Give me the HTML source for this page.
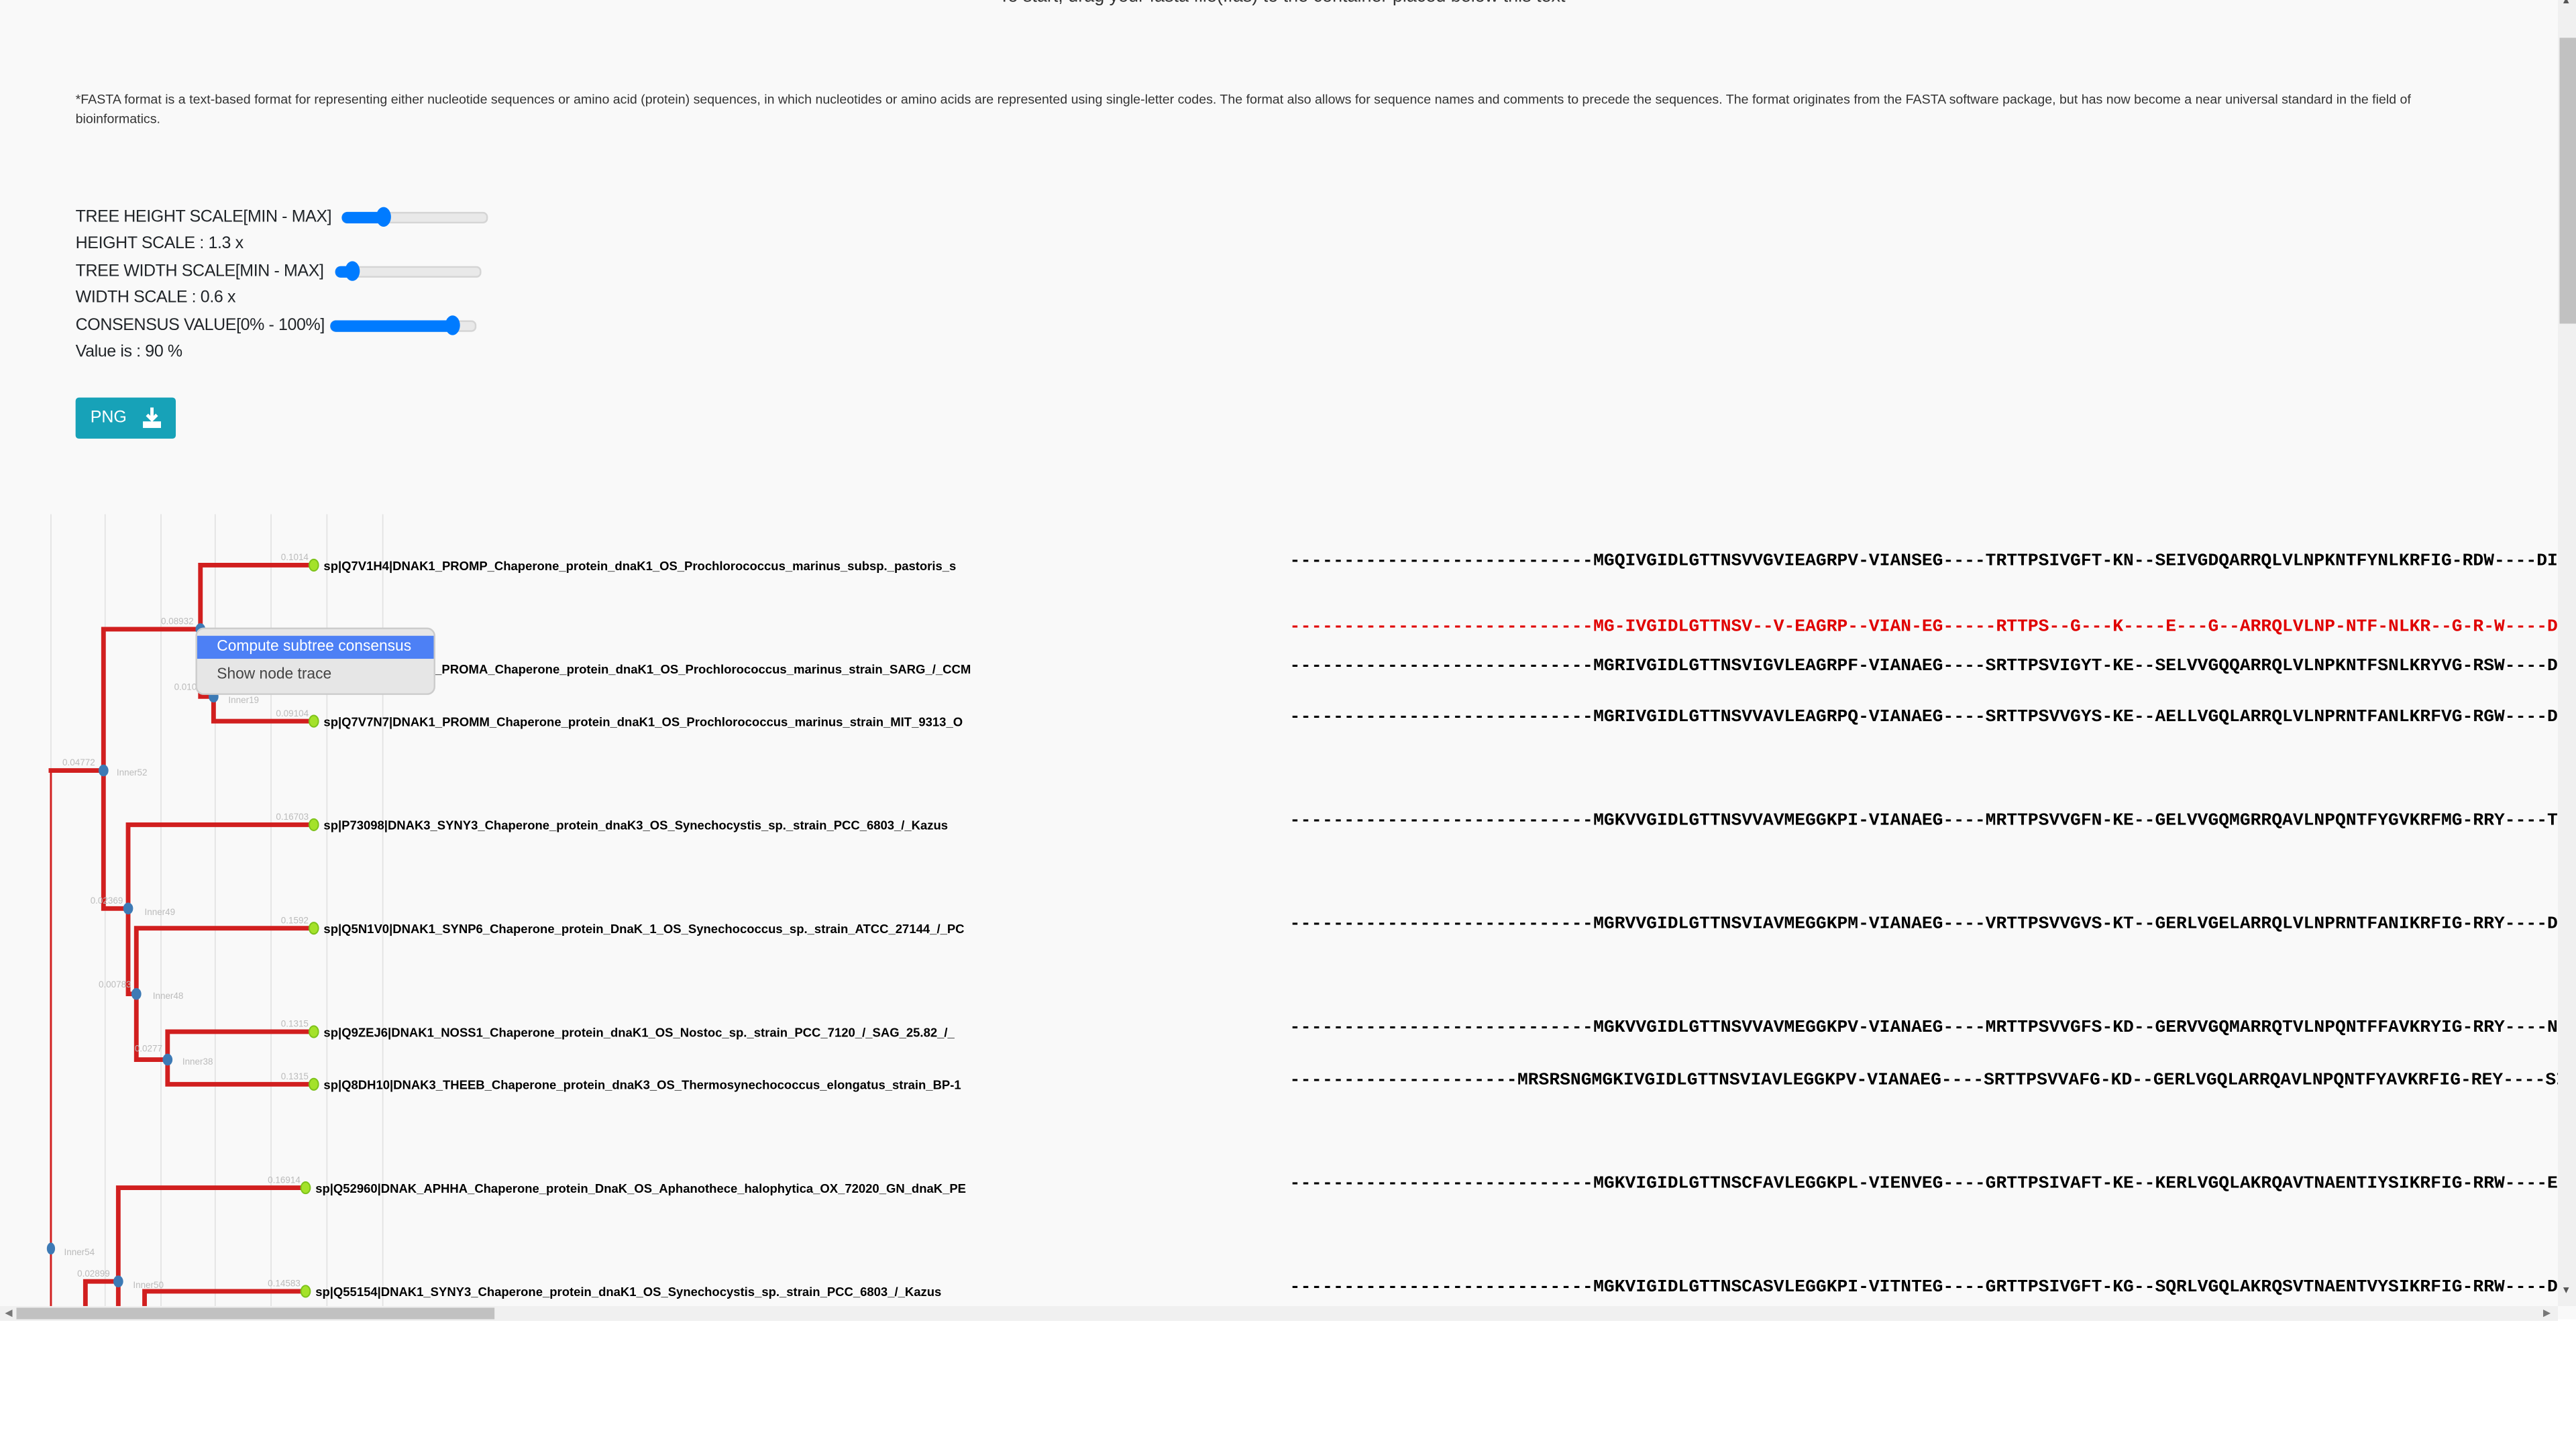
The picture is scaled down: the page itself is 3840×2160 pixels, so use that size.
<!DOCTYPE html>
<html><head><meta charset="utf-8"><style>
html,body{margin:0;padding:0;width:3840px;height:2160px;overflow:hidden;background:#fff}
#w{position:absolute;left:0;top:0;width:1568px;height:882px;transform:scale(2.44898);transform-origin:0 0;font-family:"Liberation Sans",Arial,sans-serif;color:#222}
.bg{position:absolute;left:0;top:0;width:1568px;height:803px;background:#f9f9f9}
.a{position:absolute;white-space:nowrap}
.lbl{font-size:10.2px;color:#212529;letter-spacing:-0.15px}
.tr{position:absolute;height:5px;border-radius:3px;background:#e9e9e9;border:1px solid #d5d5d5}
.fill{position:absolute;height:7px;border-radius:4px;background:#007bff}
.th{position:absolute;width:9px;height:12px;border-radius:50%;background:#007bff}
.seq{position:absolute;left:785px;width:772px;overflow:hidden;font-family:"Liberation Mono",monospace;font-weight:bold;font-size:10.75px;white-space:pre;color:#000;line-height:12px}
.seq i{font-style:normal;letter-spacing:0.15px}
</style></head><body><div id="w">
<div class="bg"></div>
<div class="a" style="left:608px;top:-8px;font-size:11px;color:#333">To start, drag your fasta file(.fas) to the container placed below this text</div>
<div class="a" style="left:46px;top:55px;font-size:8px;color:#333;line-height:12px;white-space:normal;width:1445px">*FASTA format is a text-based format for representing either nucleotide sequences or amino acid (protein) sequences, in which nucleotides or amino acids are represented using single-letter codes. The format also allows for sequence names and comments to precede the sequences. The format originates from the FASTA software package, but has now become a near universal standard in the field of bioinformatics.</div>

<div class="a lbl" style="left:46px;top:127px">TREE HEIGHT SCALE[MIN - MAX]</div>
<div class="tr" style="left:208px;top:129px;width:87px"></div>
<div class="fill" style="left:208px;top:129px;width:28px"></div>
<div class="th" style="left:229px;top:126px"></div>
<div class="a lbl" style="left:46px;top:143px">HEIGHT SCALE : 1.3 x</div>
<div class="a lbl" style="left:46px;top:160px">TREE WIDTH SCALE[MIN - MAX]</div>
<div class="tr" style="left:204px;top:162px;width:87px"></div>
<div class="fill" style="left:204px;top:162px;width:12px"></div>
<div class="th" style="left:210px;top:159px"></div>
<div class="a lbl" style="left:46px;top:176px">WIDTH SCALE : 0.6 x</div>
<div class="a lbl" style="left:46px;top:193px">CONSENSUS VALUE[0% - 100%]</div>
<div class="tr" style="left:201px;top:195px;width:87px"></div>
<div class="fill" style="left:201px;top:195px;width:76px"></div>
<div class="th" style="left:271px;top:192px"></div>
<div class="a lbl" style="left:46px;top:209px">Value is : 90 %</div>

<div class="a" style="left:46px;top:242px;width:61px;height:25px;background:#17a2b8;border-radius:2px;color:#fff;font-size:10.2px">
<span style="position:absolute;left:9px;top:7px">PNG</span>
<svg style="position:absolute;left:40px;top:6px" width="13" height="13" viewBox="0 0 13 13"><path d="M6.5 0v7M3.5 4.5l3 3 3-3" stroke="#fff" stroke-width="2" fill="none"/><rect x="1" y="8.5" width="11" height="4" fill="#fff"/></svg>
</div>

<svg class="a" style="left:0;top:313px" width="1556" height="482" viewBox="0 313 1556 482">
<g stroke="#e2e2e2" stroke-width="0.7">
<line x1="31" y1="313" x2="31" y2="795"/><line x1="64" y1="313" x2="64" y2="795"/><line x1="98" y1="313" x2="98" y2="795"/><line x1="131" y1="313" x2="131" y2="795"/><line x1="165" y1="313" x2="165" y2="795"/><line x1="199" y1="313" x2="199" y2="795"/><line x1="233" y1="313" x2="233" y2="795"/>
</g>
<g stroke="#d11f1f" fill="none" stroke-linecap="square">
<path d="M31 469V795" stroke-width="1.2"/>
<path d="M31 469H63V553H78M63 383V469M63 383H122V344H191M122 383V424H130M130 407V439H191M130 407H191M78 502V605H83M78 502H191M83 565V645H102M83 565H191M102 628V660H191M102 628H191M52 795V780H72M72 723V795M72 723H186M88 795V786H186" stroke-width="2.8"/>
</g>
<g fill="#3d7ab5">
<ellipse cx="63" cy="469" rx="3" ry="3.6"/><ellipse cx="122" cy="383" rx="3" ry="3.6"/><ellipse cx="130" cy="424" rx="3" ry="3.6"/><ellipse cx="78" cy="553" rx="3" ry="3.6"/><ellipse cx="83" cy="605" rx="3" ry="3.6"/><ellipse cx="102" cy="645" rx="3" ry="3.6"/><ellipse cx="31" cy="760" rx="2.5" ry="3.6"/><ellipse cx="72" cy="780" rx="3" ry="3.6"/>
</g>
<g fill="#a4e22a" stroke="#7dc21b" stroke-width="0.8">
<ellipse cx="191" cy="344" rx="2.8" ry="3.5"/><ellipse cx="191" cy="439" rx="2.8" ry="3.5"/><ellipse cx="191" cy="502" rx="2.8" ry="3.5"/><ellipse cx="191" cy="565" rx="2.8" ry="3.5"/><ellipse cx="191" cy="628" rx="2.8" ry="3.5"/><ellipse cx="191" cy="660" rx="2.8" ry="3.5"/><ellipse cx="186" cy="723" rx="2.8" ry="3.5"/><ellipse cx="186" cy="786" rx="2.8" ry="3.5"/>
</g>
<g fill="#bbb" font-size="5.5" font-family="Liberation Sans,Arial,sans-serif">
<text x="171" y="341">0.1014</text><text x="98" y="380">0.08932</text><text x="106" y="420">0.0103</text><text x="168" y="436">0.09104</text><text x="38" y="466">0.04772</text><text x="71" y="472">Inner52</text><text x="139" y="428">Inner19</text><text x="168" y="499">0.16703</text><text x="55" y="550">0.02369</text><text x="88" y="557">Inner49</text><text x="171" y="562">0.1592</text><text x="60" y="601">0.00783</text><text x="93" y="608">Inner48</text><text x="171" y="625">0.1315</text><text x="82" y="640">0.0277</text><text x="111" y="648">Inner38</text><text x="171" y="657">0.1315</text><text x="163" y="720">0.16914</text><text x="39" y="764">Inner54</text><text x="47" y="777">0.02899</text><text x="81" y="784">Inner50</text><text x="163" y="783">0.14583</text>
</g>
<g fill="#000" font-size="7.4" font-weight="bold" font-family="Liberation Sans,Arial,sans-serif">
<text x="197" y="347" textLength="385" lengthAdjust="spacingAndGlyphs">sp|Q7V1H4|DNAK1_PROMP_Chaperone_protein_dnaK1_OS_Prochlorococcus_marinus_subsp._pastoris_s</text>
<text x="197" y="410" textLength="394" lengthAdjust="spacingAndGlyphs">sp|Q7V0X7|DNAK1_PROMA_Chaperone_protein_dnaK1_OS_Prochlorococcus_marinus_strain_SARG_/_CCM</text>
<text x="197" y="442" textLength="389" lengthAdjust="spacingAndGlyphs">sp|Q7V7N7|DNAK1_PROMM_Chaperone_protein_dnaK1_OS_Prochlorococcus_marinus_strain_MIT_9313_O</text>
<text x="197" y="505" textLength="380" lengthAdjust="spacingAndGlyphs">sp|P73098|DNAK3_SYNY3_Chaperone_protein_dnaK3_OS_Synechocystis_sp._strain_PCC_6803_/_Kazus</text>
<text x="197" y="568" textLength="390" lengthAdjust="spacingAndGlyphs">sp|Q5N1V0|DNAK1_SYNP6_Chaperone_protein_DnaK_1_OS_Synechococcus_sp._strain_ATCC_27144_/_PC</text>
<text x="197" y="631" textLength="384" lengthAdjust="spacingAndGlyphs">sp|Q9ZEJ6|DNAK1_NOSS1_Chaperone_protein_dnaK1_OS_Nostoc_sp._strain_PCC_7120_/_SAG_25.82_/_</text>
<text x="197" y="663" textLength="388" lengthAdjust="spacingAndGlyphs">sp|Q8DH10|DNAK3_THEEB_Chaperone_protein_dnaK3_OS_Thermosynechococcus_elongatus_strain_BP-1</text>
<text x="192" y="726" textLength="396" lengthAdjust="spacingAndGlyphs">sp|Q52960|DNAK_APHHA_Chaperone_protein_DnaK_OS_Aphanothece_halophytica_OX_72020_GN_dnaK_PE</text>
<text x="192" y="789" textLength="381" lengthAdjust="spacingAndGlyphs">sp|Q55154|DNAK1_SYNY3_Chaperone_protein_dnaK1_OS_Synechocystis_sp._strain_PCC_6803_/_Kazus</text>
</g>
</svg>

<div class="a" style="left:119px;top:382px;width:144px;height:39px;background:#e6e6e6;border:1px solid #ccc;border-radius:5px;overflow:hidden;font-size:9.3px">
<div style="position:absolute;left:0;top:4px;width:144px;height:14px;background:#4d80f5;color:#fff"><span style="position:absolute;left:12px;top:1px">Compute subtree consensus</span></div>
<div style="position:absolute;left:12px;top:22px;color:#444">Show node trace</div>
</div>

<div class="seq" style="top:336px"><i>----------------------------</i>MGQIVGIDLGTTNSVVGVIEAGRPV-VIANSEG----TRTTPSIVGFT-KN--SEIVGDQARRQLVLNPKNTFYNLKRFIG-RDW----DI</div>
<div class="seq" style="top:376px;color:#e00000"><i>----------------------------</i>MG-IVGIDLGTTNSV--V-EAGRP--VIAN-EG-----RTTPS--G---K----E---G--ARRQLVLNP-NTF-NLKR--G-R-W----DI</div>
<div class="seq" style="top:400px"><i>----------------------------</i>MGRIVGIDLGTTNSVIGVLEAGRPF-VIANAEG----SRTTPSVIGYT-KE--SELVVGQQARRQLVLNPKNTFSNLKRYVG-RSW----DI</div>
<div class="seq" style="top:431px"><i>----------------------------</i>MGRIVGIDLGTTNSVVAVLEAGRPQ-VIANAEG----SRTTPSVVGYS-KE--AELLVGQLARRQLVLNPRNTFANLKRFVG-RGW----DI</div>
<div class="seq" style="top:494px"><i>----------------------------</i>MGKVVGIDLGTTNSVVAVMEGGKPI-VIANAEG----MRTTPSVVGFN-KE--GELVVGQMGRRQAVLNPQNTFYGVKRFMG-RRY----TI</div>
<div class="seq" style="top:557px"><i>----------------------------</i>MGRVVGIDLGTTNSVIAVMEGGKPM-VIANAEG----VRTTPSVVGVS-KT--GERLVGELARRQLVLNPRNTFANIKRFIG-RRY----DI</div>
<div class="seq" style="top:620px"><i>----------------------------</i>MGKVVGIDLGTTNSVVAVMEGGKPV-VIANAEG----MRTTPSVVGFS-KD--GERVVGQMARRQTVLNPQNTFFAVKRYIG-RRY----NI</div>
<div class="seq" style="top:652px"><i>---------------------</i>MRSRSNGMGKIVGIDLGTTNSVIAVLEGGKPV-VIANAEG----SRTTPSVVAFG-KD--GERLVGQLARRQAVLNPQNTFYAVKRFIG-REY----SI</div>
<div class="seq" style="top:715px"><i>----------------------------</i>MGKVIGIDLGTTNSCFAVLEGGKPL-VIENVEG----GRTTPSIVAFT-KE--KERLVGQLAKRQAVTNAENTIYSIKRFIG-RRW----EI</div>
<div class="seq" style="top:778px"><i>----------------------------</i>MGKVIGIDLGTTNSCASVLEGGKPI-VITNTEG----GRTTPSIVGFT-KG--SQRLVGQLAKRQSVTNAENTVYSIKRFIG-RRW----DI</div>

<div class="a" style="left:0;top:795px;width:1557px;height:9px;background:#f0f0f0"></div>
<div class="a" style="left:10px;top:796px;width:291px;height:7px;background:#c1c1c1"></div>
<div class="a" style="left:3px;top:796px;font-size:6px;color:#777">&#9664;</div>
<div class="a" style="left:1548px;top:796px;font-size:6px;color:#777">&#9654;</div>
<div class="a" style="left:1557px;top:0;width:11px;height:795px;background:#f0f0f0"></div>
<div class="a" style="left:1558px;top:23px;width:10px;height:174px;background:#c1c1c1"></div>
<div class="a" style="left:1559px;top:-2px;font-size:6px;color:#555">&#9650;</div>
<div class="a" style="left:1559px;top:783px;font-size:6px;color:#555">&#9660;</div>
</div></body></html>
